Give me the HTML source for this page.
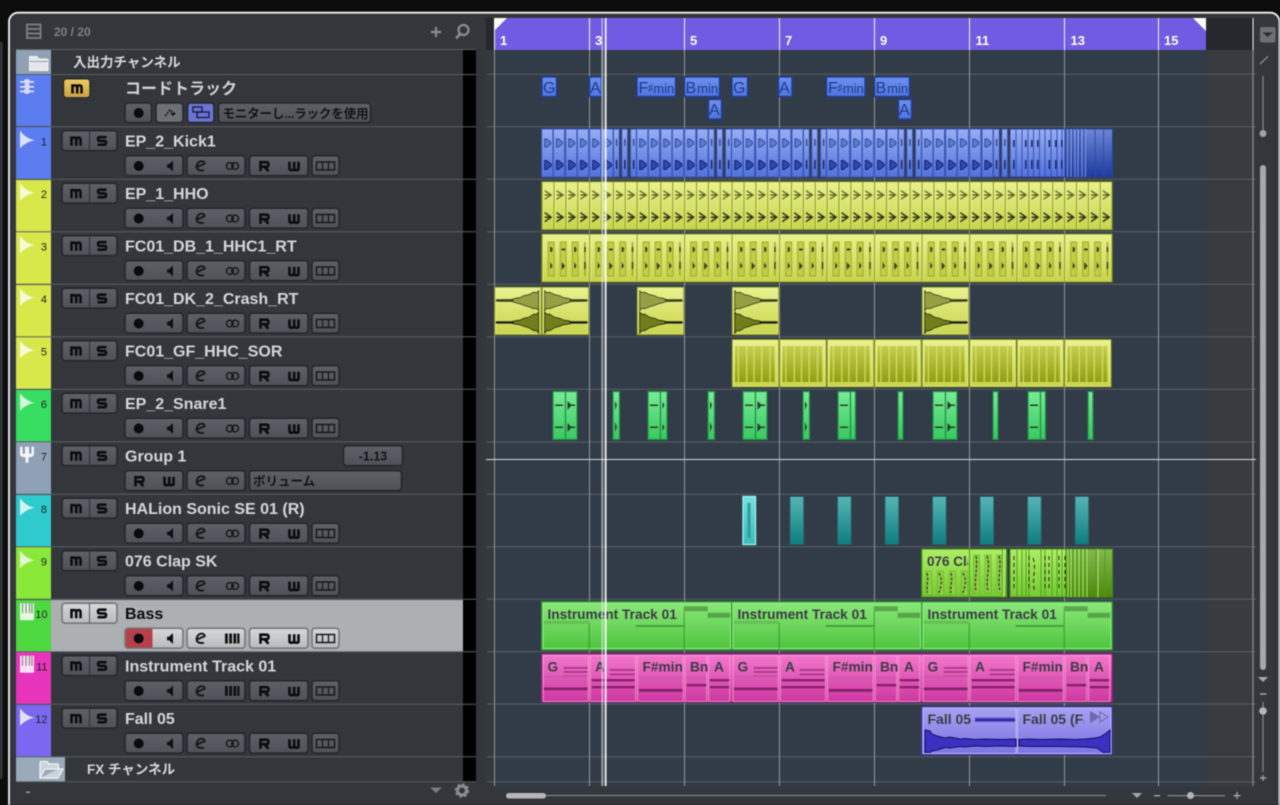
<!DOCTYPE html>
<html><head><meta charset="utf-8"><title>Tracks</title>
<style>
html,body{margin:0;padding:0;background:#0c0c0c;overflow:hidden}
svg{display:block;filter:blur(.4px)}
text{font-family:"Liberation Sans","Noto Sans CJK JP",sans-serif}
.n{font-size:16px;font-weight:700;fill:#d4d6d9}
.num{font-size:11px;fill:#20242a;text-anchor:end}
.b{fill:url(#bg);stroke:#24262a;stroke-width:1.6}
.l{fill:url(#bl);stroke:#73767a;stroke-width:1.6}
.i{fill:none;stroke:#0b0c0e;stroke-width:2.6}
.rl{font-size:13px;font-weight:700;fill:#fff}
.ct{font-size:16px;fill:#1f3b85}
.cm{font-size:13px;fill:#1f3b85}
.cl{font-size:13.7px;font-weight:700;fill:#3b3b45}
.sp{stroke:#5a5e63;stroke-width:1}
.gl{stroke:#92979d;stroke-width:1}
</style></head><body>
<svg width="1280" height="805" viewBox="0 0 1280 805" xmlns="http://www.w3.org/2000/svg">
<defs>
<linearGradient id="bg" x1="0" y1="0" x2="0" y2="1"><stop offset="0" stop-color="#5d6167"/><stop offset="1" stop-color="#4e5258"/></linearGradient>
<linearGradient id="bl" x1="0" y1="0" x2="0" y2="1"><stop offset="0" stop-color="#d6d8da"/><stop offset="1" stop-color="#b8babd"/></linearGradient>
<linearGradient id="gb" x1="0" y1="0" x2="0" y2="1"><stop offset="0" stop-color="#98aef5"/><stop offset="1" stop-color="#5272dc"/></linearGradient>
<linearGradient id="gb2" x1="0" y1="0" x2="0" y2="1"><stop offset="0" stop-color="#6d86d4"/><stop offset="1" stop-color="#1c3a9e"/></linearGradient>
<linearGradient id="gy" x1="0" y1="0" x2="0" y2="1"><stop offset="0" stop-color="#e9f28e"/><stop offset="1" stop-color="#c8d44e"/></linearGradient>
<linearGradient id="gyd" x1="0" y1="0" x2="0" y2="1"><stop offset="0" stop-color="#c6ce52"/><stop offset="1" stop-color="#929f12"/></linearGradient>
<linearGradient id="gg" x1="0" y1="0" x2="0" y2="1"><stop offset="0" stop-color="#78eb95"/><stop offset="1" stop-color="#38c860"/></linearGradient>
<linearGradient id="gt" x1="0" y1="0" x2="0" y2="1"><stop offset="0" stop-color="#57b4b4"/><stop offset="1" stop-color="#0d7e80"/></linearGradient>
<linearGradient id="gt2" x1="0" y1="0" x2="0" y2="1"><stop offset="0" stop-color="#78dede"/><stop offset="1" stop-color="#3cbaba"/></linearGradient>
<linearGradient id="gc" x1="0" y1="0" x2="0" y2="1"><stop offset="0" stop-color="#aeee66"/><stop offset="1" stop-color="#74ca32"/></linearGradient>
<linearGradient id="gc2" x1="0" y1="0" x2="0" y2="1"><stop offset="0" stop-color="#86b850"/><stop offset="1" stop-color="#4c8a0c"/></linearGradient>
<linearGradient id="gn" x1="0" y1="0" x2="0" y2="1"><stop offset="0" stop-color="#8ce87a"/><stop offset="1" stop-color="#4ec43e"/></linearGradient>
<linearGradient id="gp" x1="0" y1="0" x2="0" y2="1"><stop offset="0" stop-color="#f478cc"/><stop offset="1" stop-color="#cc38a0"/></linearGradient>
<linearGradient id="gv" x1="0" y1="0" x2="0" y2="1"><stop offset="0" stop-color="#a8a2f2"/><stop offset="1" stop-color="#7a72e2"/></linearGradient>
<linearGradient id="gc0" x1="0" y1="0" x2="0" y2="1"><stop offset="0" stop-color="#6f90ee"/><stop offset="1" stop-color="#4f74e2"/></linearGradient>
<linearGradient id="gm" x1="0" y1="0" x2="0" y2="1"><stop offset="0" stop-color="#efcb62"/><stop offset="1" stop-color="#c9a23e"/></linearGradient>

<g id="M"><path class="i" d="M-4.500 5V-3H-2.500Q0 -3.500 .2 -1V5M.2 -1Q.2 -3.500 3 -3Q4.500 -3 4.500 -1V5"/></g>
<g id="S"><path class="i" d="M4.500 -3.500H-2.500Q-4 -3.500 -4 -1.700T-2.500 .2H2.500Q4 .2 4 2.100T2.500 4H-4.500"/></g>
<g id="R"><path class="i" d="M-3.500 5.500V-3.500H2.500Q4.500 -3.500 4.500 -1.200T2.500 1H-3.500M.5 1L4.500 5.500"/></g>
<g id="W"><path class="i" d="M-4.500 -4V3Q-4.500 4.500 -2.500 4.500T.2 3V-4M.2 3Q.2 4.500 2.500 4.500T4.500 3V-4"/></g>
<g id="rec"><circle r="5" fill="#0b0b0d"/></g>
<g id="spk"><path d="M-3 -1.800H-1L3 -5.500V5.500L-1 1.800H-3Z" fill="#0e0f11"/></g>
<g id="e"><path d="M-4.500 1.500L4.200 -2.400C4 -5.500 -1 -6 -3.200 -2C-5.200 2 -3 5.500 3.500 4.300" fill="none" stroke="#17181b" stroke-width="2"/></g>
<g id="lk"><circle cx="-2.600" r="3.400" fill="none" stroke="#17181b" stroke-width="1.500"/><circle cx="2.600" r="3.400" fill="none" stroke="#17181b" stroke-width="1.500"/></g>
<g id="pn"><path d="M-7 -5H-4.200V5H-7ZM-2.800 -5H0V5H-2.800ZM1.400 -5H4.200V5H1.400ZM5.200 -5H7.500V5H5.200Z" fill="#111"/></g>
<g id="mt"><rect x="-9" y="-4" width="18" height="8" fill="none" stroke="#17181b" stroke-width="1.500"/><path d="M-3 -4V4M3 -4V4" stroke="#17181b" stroke-width="1.300"/></g>

<g id="ms"><rect class="b" x="62" y="4" width="55" height="20" rx="3"/><path d="M89.500 4V24" stroke="#2b2d31"/><use href="#M" x="76" y="14"/><use href="#S" x="102" y="14"/></g>
<g id="c1"><rect class="b" x="125" y="29" width="58" height="20" rx="3"/><use href="#rec" x="138.700" y="39.300"/><use href="#spk" x="170" y="39.300"/></g>
<g id="c2"><rect class="b" x="187" y="29" width="58" height="20" rx="3"/><use href="#e" x="200.500" y="39.300"/><use href="#lk" x="232.500" y="39.300"/></g>
<g id="c2p"><rect class="b" x="187" y="29" width="58" height="20" rx="3"/><use href="#e" x="200.500" y="39.300"/><use href="#pn" x="232" y="39.300"/></g>
<g id="c3"><rect class="b" x="249.500" y="29" width="58.500" height="20" rx="3"/><use href="#R" x="264" y="39"/><use href="#W" x="294" y="39"/></g>
<g id="c4"><rect class="b" x="312" y="29" width="27" height="20" rx="3"/><use href="#mt" x="325.500" y="39.300"/></g>
<g id="ctl"><use href="#ms"/><use href="#c1"/><use href="#c2"/><use href="#c3"/><use href="#c4"/></g>
<g id="ctlp"><use href="#ms"/><use href="#c1"/><use href="#c2p"/><use href="#c3"/><use href="#c4"/></g>
<path id="pl" d="M20 4L20 21.500C23 18.500 28 14.500 35 13.500C28 12.500 23 8 20 4Z" fill="#fff" fill-opacity=".78"/>
<g id="kb"><rect x="20" y="4" width="14" height="17" fill="#fff" fill-opacity=".85"/><path d="M22.500 4V14M26 4V14M29.500 4V14M32 4V14" stroke="#000" stroke-opacity=".4" stroke-width="1.300"/></g>

<g id="hit"><path d="M1.500 -4H3.500L7.500 -1V1L3.500 4H1.500Z" fill="#5c7ad8" stroke="#3a4a90" stroke-width="1"/></g>
<g id="hit2"><path d="M1.500 -4.500H3.500L8 -1V1L3.500 4.500H1.500Z" fill="#2c48b4" stroke="#182464" stroke-width="1"/></g>
<g id="ks"><rect x="0" y="0" width="11.200" height="48" fill="url(#gb)" stroke="#3a58b8"/><use href="#hit" x="1.500" y="14"/><use href="#hit2" x="1.500" y="36"/></g>
<g id="kt"><rect x="0" y="0" width="6" height="48" fill="url(#gb)" stroke="#2f4aa0"/><rect x="2.500" y="10" width="1.500" height="7" fill="#3a4a90"/><rect x="2.500" y="31" width="1.500" height="9" fill="#182464"/></g>
<g id="kp"><use href="#ks"/><use href="#ks" x="11.700"/><use href="#ks" x="24"/><use href="#ks" x="35.700"/><use href="#ks" x="48"/><use href="#ks" x="60.300"/><use href="#kt" x="71.700"/><use href="#kt" x="80"/><use href="#kt" x="88.700"/></g>

<pattern id="p2" patternUnits="userSpaceOnUse" x="541.67" y="181.7" width="11.875" height="48">
<rect x="0" width="1" height="48" fill="#8a9922"/><rect x="1" width="1" height="48" fill="#f2f8a6" opacity=".5"/>
<path d="M3 9L9.500 13.300L3 17.500M3 13.300H9" fill="none" stroke="#5c6128" stroke-width="1.300"/>
<path d="M3 31L9.500 35.500L3 40M3 35.500H9" fill="none" stroke="#2f3218" stroke-width="1.400"/>
</pattern>
<pattern id="p3" patternUnits="userSpaceOnUse" x="541.67" y="234" width="47.5" height="48">
<rect x="0" width="1" height="48" fill="#8e9d22"/><rect x="1" width="1" height="48" fill="#f2f8a6" opacity=".6"/>
<g fill="#c2ce48" stroke="#9aa828" stroke-width=".9"><rect x="6.500" y="8" width="6" height="34"/><rect x="18.500" y="8" width="6" height="34"/><rect x="30.500" y="8" width="6" height="34"/></g>
<rect x="42.500" y="8" width="1.500" height="34" fill="#9aa828"/>
<g fill="#3c401e"><path d="M8.500 13H10L11 15.500L10 18H8.500Z"/><path d="M20 14.500H23.500V16.500H20Z"/><path d="M32.500 13H34L35 15.500L34 18H32.500Z"/><rect x="42.500" y="13" width="1.600" height="5"/><path d="M8.500 28L11 32L8.500 35Z"/><path d="M20 28L23.500 32L20 36Z"/><path d="M32.500 28L35 32L32.500 35Z"/><rect x="42.500" y="28" width="1.600" height="7"/></g>
</pattern>

<g id="wv">
<path d="M3 4L5 6L8 5.500L13 8L18 9L22 11L26 11.500L30 12.800L45 13V14.500L30 14.800L26 16L22 17L18 18.500L13 20L8 22L5 21.500L3 24Z" fill="#969f44" stroke="#3a3d1e" stroke-width=".8"/>
<path d="M3 25.300L5 27.500L8 27.500L13 30.600L18 31.500L22 33.500L26 34L30 35L45 35V36.500L30 36.500L26 37.500L22 38L18 39.500L13 41L8 44L5 44L3 46.600Z" fill="#717e1c" stroke="#26280f" stroke-width=".8"/>
<rect x="28" y="13" width="18" height="1.400" fill="#3a3c22"/><rect x="28" y="35" width="18" height="1.500" fill="#1c1d0e"/>
</g>
<g id="cy"><rect x=".5" y=".5" width="46.500" height="47.500" fill="url(#gy)" stroke="#7f8c1c"/><rect x="1.500" y="1.500" width="44.500" height="45.500" fill="none" stroke="#f0f7a0" stroke-opacity=".5"/></g>
<g id="c5"><use href="#cy"/><rect x="3.300" y="7" width="39.700" height="36" fill="url(#gyd)"/><path d="M6.700 7V43M15 7V43M22.300 7V43M30 7V43M38.300 7V43" stroke="#e0e672" stroke-width="1.300" opacity=".8"/></g>

<g id="notesB">
<rect x="2" y="19" width="45" height="3" fill="#3d8c32" opacity=".3"/>
<rect x="94" y="23.500" width="48" height="1.400" fill="#2e7a28" opacity=".8"/>
<rect x="142" y="4.500" width="24" height="5" fill="#3d8032" opacity=".6"/>
<rect x="166" y="11" width="22.500" height="5" fill="#3d8032" opacity=".6"/>
<path d="M47.500 21V47M142.500 10V47" stroke="#2f8a2c" stroke-width="1" opacity=".8"/>
</g>
<g id="notesP">
<g fill="#a83888"><rect x="22" y="13" width="24" height="1.800"/><rect x="22" y="17" width="24" height="1.800"/><rect x="22" y="21.500" width="24" height="1.800"/><rect x="68" y="15" width="25" height="1.800"/><rect x="68" y="19.500" width="25" height="1.800"/></g>
<g fill="#c75aa8"><rect x="2" y="22" width="45" height="1.500"/><rect x="97" y="22.800" width="44" height="2"/><rect x="145" y="22.800" width="20" height="2"/></g>
<g fill="#87206e"><rect x="2" y="33.500" width="44" height="2.800"/><rect x="50" y="25" width="43" height="2.400"/><rect x="50" y="32" width="43" height="2.400"/><rect x="97" y="35" width="44" height="2.800"/><rect x="145" y="30" width="20" height="2.400"/><rect x="168" y="25" width="20" height="2.400"/><rect x="168" y="32" width="20" height="2.400"/></g>
<g fill="none" stroke="#f9a8de" stroke-opacity=".7"><rect x="1.500" y="1.500" width="45" height="46"/><rect x="48.500" y="1.500" width="45.500" height="46"/><rect x="96" y="1.500" width="45.500" height="46"/><rect x="143.500" y="1.500" width="21.500" height="46"/><rect x="167" y="1.500" width="21" height="46"/></g>
</g>
<clipPath id="cc1"><rect x="924" y="550" width="44" height="20"/></clipPath>
<clipPath id="cf1"><rect x="1020" y="708" width="64" height="22"/></clipPath>
</defs>

<!-- window -->
<rect width="1280" height="805" fill="#0c0c0c"/>
<rect x="0" y="42" width="2.500" height="737" fill="#36393e"/>
<rect x="9" y="12.700" width="1270.500" height="800" rx="9" fill="#33373c" stroke="#f2f2f2" stroke-width="1.800"/>

<!-- header -->
<g fill="none" stroke="#777b80" stroke-width="2"><rect x="27" y="24.500" width="13.500" height="13.500"/><path d="M27 29H40.500M27 33.500H40.500"/></g>
<text x="54" y="36" font-size="12" font-weight="700" fill="#7e8288">20 / 20</text>
<path d="M436 27V37M431 32H441" stroke="#8a8e93" stroke-width="2.200"/>
<circle cx="463.500" cy="30" r="5" fill="none" stroke="#8a8e93" stroke-width="2.200"/><path d="M460 34L456 38.500" stroke="#8a8e93" stroke-width="2.600"/>

<!-- track list background -->
<rect x="463" y="50" width="13" height="732" fill="#000"/>
<rect x="16" y="50" width="35" height="24" fill="#8fa1b4"/>
<rect x="16" y="75" width="35" height="51" fill="#5b7df0"/>
<rect x="16" y="127" width="35" height="52" fill="#5b7df0"/>
<rect x="16" y="180" width="35" height="52" fill="#d8e84b"/>
<rect x="16" y="232" width="35" height="52" fill="#d8e84b"/>
<rect x="16" y="285" width="35" height="52" fill="#d8e84b"/>
<rect x="16" y="337" width="35" height="52" fill="#d8e84b"/>
<rect x="16" y="390" width="35" height="52" fill="#37de5f"/>
<rect x="16" y="442" width="35" height="52" fill="#8fa1b4"/>
<rect x="16" y="495" width="35" height="52" fill="#2fcacd"/>
<rect x="16" y="547" width="35" height="52" fill="#8ae838"/>
<rect x="16" y="600" width="35" height="52" fill="#4ed940"/>
<rect x="16" y="652" width="35" height="52" fill="#e834ba"/>
<rect x="16" y="705" width="35" height="52" fill="#7a68f0"/>
<rect x="16" y="757" width="49" height="25" fill="#9aaabb"/>
<rect x="51" y="600" width="412" height="52" fill="#adb0b3"/>
<path class="sp" d="M16 49.500H476M16 74.500H476M16 126.700H476M16 179.200H476M16 231.700H476M16 284.200H476M16 336.700H476M16 389.200H476M16 441.700H476M16 494.200H476M16 546.700H476M16 599.200H476M16 651.700H476M16 704.200H476M16 756.700H476M16 781.700H476"/>

<!-- folder row -->
<path d="M29.500 56.500H37L39 59H46.500C47.500 59 48 59.500 48 60V70.500H29.500Z" fill="#e4e8ec" stroke="#f4f4f4"/><path d="M29.500 61.500H48" stroke="#8fa1b4"/>
<text x="73" y="67" font-size="13.500" font-weight="700" fill="#d6d8da">入出力チャンネル</text>

<!-- chord track -->
<g fill="#d5dbf8"><rect x="20" y="81" width="14" height="1.800"/><rect x="20" y="86" width="14" height="1.800"/><rect x="20" y="90.500" width="14" height="1.800"/><rect x="24" y="79" width="6" height="5.500" rx="2.500"/><rect x="24" y="84" width="6" height="5" rx="2.500"/><rect x="24" y="88.500" width="6" height="5.500" rx="2.500"/></g>
<rect x="63.500" y="78.800" width="26.500" height="19" rx="3" fill="url(#gm)" stroke="#25272b" stroke-width="1.400"/><use href="#M" x="77" y="88.500"/>
<text x="125" y="94" font-size="16" font-weight="700" fill="#d0d2d5">コードトラック</text>
<rect class="b" x="125" y="103" width="26.500" height="19.500" rx="3"/><use href="#rec" x="138.700" y="113"/>
<rect x="156" y="103" width="27" height="19.500" rx="3" fill="#6d7176" stroke="#25272b" stroke-width="1.600"/>
<path d="M165 116L170 110L175 114" fill="none" stroke="#111" stroke-width="1.400" stroke-dasharray="2 1"/><path d="M170 113L176 113L173 116Z" fill="#111"/>
<rect x="187.500" y="103" width="26.500" height="19.500" rx="3" fill="#6a74d6" stroke="#25272b" stroke-width="1.600"/>
<g fill="none" stroke="#1b1e3c" stroke-width="1.400"><rect x="193" y="107" width="9" height="5"/><rect x="197" y="112" width="12" height="5.500"/></g>
<rect class="b" x="218.500" y="103" width="152" height="19.500" rx="3"/>
<text x="222.500" y="118" font-size="12.500" font-weight="700" fill="#121316" textLength="146">モニターし...ラックを使用</text>

<!-- track 1-12 -->
<g transform="translate(0,126.700)"><use href="#pl"/><text class="num" x="47" y="19">1</text><use href="#ctl"/><text class="n" x="125" y="20">EP_2_Kick1</text></g>
<g transform="translate(0,179.200)"><use href="#pl"/><text class="num" x="47" y="19">2</text><use href="#ctl"/><text class="n" x="125" y="20">EP_1_HHO</text></g>
<g transform="translate(0,231.700)"><use href="#pl"/><text class="num" x="47" y="19">3</text><use href="#ctl"/><text class="n" x="125" y="20">FC01_DB_1_HHC1_RT</text></g>
<g transform="translate(0,284.200)"><use href="#pl"/><text class="num" x="47" y="19">4</text><use href="#ctl"/><text class="n" x="125" y="20">FC01_DK_2_Crash_RT</text></g>
<g transform="translate(0,336.700)"><use href="#pl"/><text class="num" x="47" y="19">5</text><use href="#ctl"/><text class="n" x="125" y="20">FC01_GF_HHC_SOR</text></g>
<g transform="translate(0,389.200)"><use href="#pl"/><text class="num" x="47" y="19">6</text><use href="#ctl"/><text class="n" x="125" y="20">EP_2_Snare1</text></g>
<g transform="translate(0,441.700)">
<path d="M20 5V12C20 14.500 22 15.500 25.500 15.500V21H28.500V15.500C32 15.500 34 14.500 34 12V5H31.500V12H29V5H25V12H22.500V5Z" fill="#fff" fill-opacity=".9"/>
<text class="num" x="47" y="19">7</text><use href="#ms"/>
<text class="n" x="125" y="20">Group 1</text>
<rect class="b" x="343.500" y="4" width="59" height="20" rx="3"/><text x="373" y="19" font-size="12.500" font-weight="700" fill="#121316" text-anchor="middle">-1.13</text>
<rect class="b" x="125" y="29" width="58" height="20" rx="3"/><use href="#R" x="139" y="39"/><use href="#W" x="169" y="39"/>
<use href="#c2"/>
<rect class="b" x="249.500" y="29" width="152" height="20" rx="3"/><text x="253" y="44" font-size="12.500" font-weight="700" fill="#121316">ボリューム</text>
</g>
<g transform="translate(0,494.200)"><use href="#pl"/><text class="num" x="47" y="19">8</text><use href="#ctl"/><text class="n" x="125" y="20">HALion Sonic SE 01 (R)</text></g>
<g transform="translate(0,546.700)"><use href="#pl"/><text class="num" x="47" y="19">9</text><use href="#ctl"/><text class="n" x="125" y="20">076 Clap SK</text></g>
<g transform="translate(0,599.200)"><use href="#kb"/><text class="num" x="47.500" y="19">10</text>
<rect class="l" x="62" y="4" width="55" height="20" rx="3"/><path d="M89.500 4V24" stroke="#55585c"/><use href="#M" x="76" y="14"/><use href="#S" x="102" y="14"/>
<text class="n" x="125" y="20" style="fill:#0b0b0c">Bass</text>
<rect class="l" x="125" y="29" width="58" height="20" rx="3"/><path d="M125.700 32a3 3 0 0 1 3-2.300H152.500V48.300H128.700a3 3 0 0 1-3-2.300Z" fill="#b5404b"/><use href="#rec" x="138.700" y="39.300"/><use href="#spk" x="170" y="39.300"/>
<rect class="l" x="187" y="29" width="58" height="20" rx="3"/><use href="#e" x="200.500" y="39.300"/><use href="#pn" x="232" y="39.300"/>
<rect class="l" x="249.500" y="29" width="58.500" height="20" rx="3"/><use href="#R" x="264" y="39"/><use href="#W" x="294" y="39"/>
<rect class="l" x="312" y="29" width="27" height="20" rx="3"/><use href="#mt" x="325.500" y="39.300"/></g>
<g transform="translate(0,651.700)"><use href="#kb"/><text class="num" x="47.500" y="19">11</text><use href="#ctlp"/><text class="n" x="125" y="20">Instrument Track 01</text></g>
<g transform="translate(0,704.200)"><use href="#pl"/><text class="num" x="47.500" y="19">12</text><use href="#ctl"/><text class="n" x="125" y="20">Fall 05</text></g>

<!-- FX folder -->
<path d="M40 778V763C40 762 40.500 761.500 41.500 761.500H47L49 764H57C58 764 58.500 764.500 58.500 765.500V769H45L40 778H58L63 769H58.500" fill="#dfe4e9" fill-opacity=".7" stroke="#f2f4f6" stroke-width="1.200"/>
<text x="87" y="774" font-size="13.500" font-weight="700" fill="#d6d8da">FX チャンネル</text>

<!-- bottom-left -->
<rect x="26" y="791.500" width="4" height="1.500" fill="#9a9ea3"/>
<path d="M430 787.500H442L436 793Z" fill="#777b80"/>
<circle cx="462" cy="790.500" r="4.500" fill="none" stroke="#8a8e93" stroke-width="3"/><circle cx="462" cy="790.500" r="6.300" fill="none" stroke="#8a8e93" stroke-width="2" stroke-dasharray="2.400 2.550"/>

<!-- arrange bg -->
<rect x="486" y="50" width="8" height="736" fill="#35393e"/>
<rect x="494" y="50" width="712" height="736" fill="#323c48"/>
<rect x="1206" y="50" width="47" height="736" fill="#383b40"/>
<!-- ruler -->
<rect x="486" y="18" width="8" height="32" fill="#25282c"/>
<rect x="494" y="18" width="712" height="32" fill="#705be2"/>
<rect x="1206" y="18" width="47" height="32" fill="#25282c"/>
<path d="M494 18H507L494 31Z" fill="#fff"/><path d="M1193 18H1206V31Z" fill="#fff"/>
<path d="M494.500 18V50M589.500 18V50M684.500 18V50M779.500 18V50M874.500 18V50M969.500 18V50M1064.500 18V50M1158.500 18V50M1253 18V50" stroke="#f4f4fa" stroke-width="1"/>
<text class="rl" x="500" y="45">1</text><text class="rl" x="595" y="45">3</text><text class="rl" x="690" y="45">5</text><text class="rl" x="785" y="45">7</text><text class="rl" x="880" y="45">9</text><text class="rl" x="975.500" y="45">11</text><text class="rl" x="1070.500" y="45">13</text><text class="rl" x="1164" y="45">15</text>

<!-- grid -->
<path class="sp" d="M487 74.300H1256M487 126.700H1256M487 179.300H1256M487 231.700H1256M487 284.200H1256M487 336.700H1256M487 389.300H1256M487 442H1256M487 494.300H1256M487 546.700H1256M487 599.300H1256M487 651.700H1256M487 704H1256M487 756.700H1256M487 781.700H1256"/>
<path class="gl" d="M494.500 50V786M589.500 50V786M684.500 50V786M779.500 50V786M874.500 50V786M969.500 50V786M1064.500 50V786M1158.500 50V786"/>
<path d="M1253 50V786" stroke="#8c9096" stroke-width="1.200"/>
<path d="M486 459.500H1256" stroke="#d8dbde" stroke-width="1"/>

<!-- chord events -->
<g fill="url(#gc0)" stroke="#1d3d9e" stroke-width="1.400">
<rect x="542" y="77" width="14.500" height="19.500"/><rect x="589.500" y="77" width="12" height="19.500"/><rect x="637" y="77" width="38.500" height="19.500"/><rect x="684.500" y="77" width="35" height="19.500"/><rect x="708.500" y="99.500" width="13" height="19.500"/><rect x="732" y="77" width="15.500" height="19.500"/><rect x="778.500" y="77" width="13.500" height="19.500"/><rect x="826.500" y="77" width="38.500" height="19.500"/><rect x="874.500" y="77" width="35" height="19.500"/><rect x="898.500" y="99.500" width="13" height="19.500"/></g>
<text class="ct" x="543" y="93">G</text><text class="ct" x="590" y="93">A</text>
<text class="ct" x="638.500" y="93">F<tspan font-size="10" dy="-2">♯</tspan><tspan class="cm" dy="2" font-size="13">min</tspan></text>
<text class="ct" x="685.500" y="93">B<tspan font-size="13" dx="1">min</tspan></text>
<text class="ct" x="709" y="115">A</text><text class="ct" x="733" y="93">G</text><text class="ct" x="779" y="93">A</text>
<text class="ct" x="828" y="93">F<tspan font-size="10" dy="-2">♯</tspan><tspan class="cm" dy="2" font-size="13">min</tspan></text>
<text class="ct" x="875.500" y="93">B<tspan font-size="13" dx="1">min</tspan></text>
<text class="ct" x="899" y="115">A</text>

<!-- row 1 kick -->
<g transform="translate(541.670,129)"><use href="#kp"/><use href="#kp" x="95"/><use href="#kp" x="190"/><use href="#kp" x="285"/><use href="#kp" x="380"/></g>
<g transform="translate(1010,129)">
<rect x="0" y="0" width="55" height="48" fill="url(#gb)" stroke="#2a4296"/>
<rect x="55" y="0" width="47.500" height="48" fill="url(#gb2)" stroke="#2a4296"/>
<path d="M6 0V48M12 0V48M18 0V48M23.500 0V48M29.500 0V48M35 0V48M41 0V48M47 0V48M52 0V48M56.500 0V48M59.500 0V48M63 0V48M66.500 0V48M70 0V48M74 0V48M85 0V48M93.500 0V48" stroke="#2f4cac" stroke-width=".9"/>
<path d="M57.500 0V48M61 0V48M65 0V48M68 0V48M72 0V48M75.500 0V48" stroke="#90a8ee" stroke-width="1" opacity=".8"/>
<g fill="#1a2a70"><rect x="3" y="11" width="1.600" height="7"/><rect x="15" y="11" width="1.600" height="7"/><rect x="21" y="11" width="1.600" height="7"/><rect x="27" y="11" width="1.600" height="7"/><rect x="38.500" y="11" width="1.600" height="7"/><rect x="45" y="11" width="1.600" height="7"/><rect x="51" y="11" width="1.600" height="7"/><rect x="3" y="31" width="1.600" height="9"/><rect x="15" y="31" width="1.600" height="9"/><rect x="21" y="31" width="1.600" height="9"/><rect x="27" y="31" width="1.600" height="9"/><rect x="38.500" y="31" width="1.600" height="9"/><rect x="45" y="31" width="1.600" height="9"/><rect x="51" y="31" width="1.600" height="9"/></g>
</g>

<!-- row 2 -->
<rect x="541.670" y="181.700" width="570.500" height="48" fill="url(#gy)"/><rect x="541.670" y="181.700" width="570.500" height="48" fill="url(#p2)" stroke="#808e1c"/>
<!-- row 3 -->
<rect x="541.670" y="234" width="570.500" height="48" fill="url(#gy)"/><rect x="541.670" y="234" width="570.500" height="48" fill="url(#p3)" stroke="#808e1c"/>

<!-- row 4 -->
<g transform="translate(494.200,286.700)"><use href="#cy"/><g transform="matrix(-1 0 0 1 47.500 0)"><use href="#wv"/></g></g>
<g transform="translate(541.670,286.700)"><use href="#cy"/><use href="#wv"/></g>
<g transform="translate(636.700,286.700)"><use href="#cy"/><use href="#wv"/></g>
<g transform="translate(731.700,286.700)"><use href="#cy"/><use href="#wv"/></g>
<g transform="translate(921.700,286.700)"><use href="#cy"/><use href="#wv"/></g>

<!-- row 5 -->
<g transform="translate(731.700,339)"><use href="#c5"/></g><g transform="translate(779.200,339)"><use href="#c5"/></g><g transform="translate(826.700,339)"><use href="#c5"/></g><g transform="translate(874.200,339)"><use href="#c5"/></g><g transform="translate(921.700,339)"><use href="#c5"/></g><g transform="translate(969.200,339)"><use href="#c5"/></g><g transform="translate(1016.700,339)"><use href="#c5"/></g><g transform="translate(1064.200,339)"><use href="#c5"/></g>

<!-- row 6 -->
<g fill="url(#gg)" stroke="#1f8c46" stroke-width="1.200">
<rect x="553" y="391.500" width="12.500" height="48"/><rect x="565.500" y="391.500" width="11.500" height="48"/><rect x="613" y="391.500" width="6.500" height="48"/><rect x="648" y="391.500" width="12.500" height="48"/><rect x="660.500" y="391.500" width="6.500" height="48"/><rect x="708" y="391.500" width="6.500" height="48"/><rect x="743" y="391.500" width="12.500" height="48"/><rect x="755.500" y="391.500" width="11.500" height="48"/><rect x="803" y="391.500" width="6.500" height="48"/><rect x="838" y="391.500" width="12.500" height="48"/><rect x="850.500" y="391.500" width="5" height="48"/><rect x="898" y="391.500" width="5" height="48"/><rect x="933" y="391.500" width="12.500" height="48"/><rect x="945.500" y="391.500" width="11.500" height="48"/><rect x="993" y="391.500" width="5" height="48"/><rect x="1028" y="391.500" width="12.500" height="48"/><rect x="1040.500" y="391.500" width="5" height="48"/><rect x="1088" y="391.500" width="5" height="48"/></g>
<g fill="#2e3a30">
<path d="M555 404.500H563V406H555ZM567.500 401L571 404.500H575V406H571L567.500 410ZM555 426.500H563V428H555ZM567.500 423L571 426.500H575V428H571L567.500 432Z"/>
<path d="M615 401L617 405L615 410ZM615 422L617 427L615 432Z"/>
<path d="M650 404.500H658V406H650ZM662.500 402L664.500 405L662.500 409ZM650 426.500H658V428H650ZM662.500 424L664.500 427L662.500 431Z"/>
<path d="M710 401L712 405L710 410ZM710 422L712 427L710 432Z"/>
<path d="M745 404.500H753V406H745ZM757.500 401L761 404.500H765V406H761L757.500 410ZM745 426.500H753V428H745ZM757.500 423L761 426.500H765V428H761L757.500 432Z"/>
<path d="M805 401L807 405L805 410ZM805 422L807 427L805 432Z"/>
<path d="M840 404.500H848V406H840ZM840 426.500H848V428H840Z"/>
<path d="M935 404.500H943V406H935ZM947.500 401L951 404.500H955V406H951L947.500 410ZM935 426.500H943V428H935ZM947.500 423L951 426.500H955V428H951L947.500 432Z"/>
<path d="M1030 404.500H1038V406H1030ZM1030 426.500H1038V428H1030Z"/>
</g>

<!-- row 8 -->
<rect x="743" y="496.500" width="12.500" height="48" fill="url(#gt2)" stroke="#8ff2f2" stroke-width="1.400"/><rect x="747.500" y="503" width="3" height="35" fill="#2f9c9e"/>
<g fill="url(#gt)" stroke="#2a5d66" stroke-width=".8"><rect x="790" y="496.500" width="13.700" height="48"/><rect x="837.500" y="496.500" width="13.700" height="48"/><rect x="885" y="496.500" width="13.700" height="48"/><rect x="932.500" y="496.500" width="13.700" height="48"/><rect x="980" y="496.500" width="13.700" height="48"/><rect x="1027.500" y="496.500" width="13.700" height="48"/><rect x="1075" y="496.500" width="13.700" height="48"/></g>

<!-- row 9 -->
<rect x="921.700" y="549" width="85" height="48" fill="url(#gc)" stroke="#3f8c10" stroke-width="1.200"/>
<path d="M969.500 549V597M1002.500 549V597" stroke="#4e9c1c"/><path d="M1003.500 549V597" stroke="#c8f58e"/>
<g fill="#8fd049" stroke="#6db02c" stroke-width=".7"><rect x="925.500" y="571" width="6" height="24"/><rect x="937.500" y="571" width="6" height="24"/><rect x="949.500" y="571" width="6" height="24"/><rect x="961.500" y="571" width="6" height="24"/><rect x="973.500" y="555" width="6" height="38"/><rect x="985" y="555" width="6" height="38"/><rect x="997" y="555" width="5" height="38"/></g>
<path d="M927 573C929 580 926 586 927.500 593M939 573C943 580 941 586 939 593M951 573C953 580 950 586 951 593M963 573C967 580 965 586 963 593M976 556C978 565 974 580 976 591M987 556C991 565 985 580 988 591M999 556C1002 565 997 580 1000 591" fill="none" stroke="#1e2a10" stroke-width="1.100" stroke-dasharray="3 1.500"/>
<text x="927" y="566" font-size="13.500" font-weight="700" fill="#3b3b45" clip-path="url(#cc1)">076 Clap</text>
<rect x="1010" y="549" width="56" height="48" fill="url(#gc)" stroke="#3f8c10"/><rect x="1066" y="549" width="46.500" height="48" fill="url(#gc2)" stroke="#3f8c10"/>
<path d="M1017 549V597M1022 549V597M1026 549V597M1029 549V597M1041 549V597M1045 549V597M1052 549V597M1057 549V597M1062 549V597M1069 549V597M1073 549V597M1077 549V597M1081 549V597M1085 549V597M1096 549V597M1105 549V597" stroke="#4e9c1c" stroke-width=".9"/>
<path d="M1068 549V597M1071 549V597M1075 549V597M1079 549V597M1083 549V597M1087 549V597M1098 549V597" stroke="#b4ec72" stroke-width=".9"/>
<path d="M1014 556V590M1029 556V590M1033 558C1037 568 1031 580 1035 592M1045 556V590M1049 556V590M1059 556V590M1065 556V590" fill="none" stroke="#1e2a10" stroke-width="1" stroke-dasharray="4 3"/>

<!-- row 10 -->
<g fill="url(#gn)" stroke="#2f9c30" stroke-width="1.400"><rect x="541.700" y="601.800" width="190" height="48"/><rect x="731.700" y="601.800" width="190" height="48"/><rect x="921.700" y="601.800" width="190.500" height="48"/></g>
<g fill="none" stroke="#96ec88" stroke-width="1"><rect x="543" y="603" width="187.500" height="45.500"/><rect x="733" y="603" width="187.500" height="45.500"/><rect x="923" y="603" width="188" height="45.500"/></g>
<g transform="translate(541.700,601.800)"><use href="#notesB"/></g><g transform="translate(731.700,601.800)"><use href="#notesB"/></g><g transform="translate(921.700,601.800)"><use href="#notesB"/></g>
<text class="cl" x="547.500" y="619">Instrument Track 01</text><text class="cl" x="737.500" y="619">Instrument Track 01</text><text class="cl" x="927.500" y="619">Instrument Track 01</text>

<!-- row 11 -->
<rect x="541.700" y="654" width="570.500" height="48" fill="url(#gp)" stroke="#9c1c80" stroke-width="1.200"/>
<g transform="translate(541.700,654)"><use href="#notesP"/></g><g transform="translate(731.700,654)"><use href="#notesP"/></g><g transform="translate(921.700,654)"><use href="#notesP"/></g>
<text class="cl" x="547.500" y="671.500">G</text><text class="cl" x="595" y="671.500">A</text><text class="cl" x="642.500" y="671.500">F#min</text><text class="cl" x="690" y="671.500">Bn</text><text class="cl" x="714" y="671.500">A</text>
<text class="cl" x="737.500" y="671.500">G</text><text class="cl" x="785" y="671.500">A</text><text class="cl" x="832.500" y="671.500">F#min</text><text class="cl" x="880" y="671.500">Bn</text><text class="cl" x="904" y="671.500">A</text>
<text class="cl" x="927.500" y="671.500">G</text><text class="cl" x="975" y="671.500">A</text><text class="cl" x="1022.500" y="671.500">F#min</text><text class="cl" x="1070" y="671.500">Bn</text><text class="cl" x="1094" y="671.500">A</text>

<!-- row 12 -->
<rect x="921.700" y="706.700" width="190.500" height="48" fill="url(#gv)" stroke="#3c30a8" stroke-width="1.200"/>
<g fill="none" stroke="#bdb8f6" stroke-width="1"><rect x="923" y="708" width="93" height="45.500"/><rect x="1017.500" y="708" width="93.500" height="45.500"/></g>
<path d="M925 730L930 731L932 734L937 736L945 738L950 737L960 739L965 738.500L975 739.500L985 739L1000 739.500L1016 739V746.500L1000 746L985 746.500L975 746L965 747L960 746.500L950 748L945 747.500L937 750L932 751L930 752.500H925Z" fill="#3a30c2" stroke="#15105c" stroke-width="1"/>
<path d="M1019 739.500L1030 739L1040 739.500L1060 739L1075 739.500L1085 739L1095 738L1100 737L1105 734L1110 730V752.500H1103L1100 750L1097 748L1085 747L1060 746.500L1040 746.500L1030 746.500L1019 746Z" fill="#3a30c2" stroke="#15105c" stroke-width="1"/>
<path d="M975 717.500H1015V722H975Z" fill="#4a40cc" opacity=".85"/><path d="M975 720H1015" stroke="#15105c" stroke-width="1"/>
<text class="cl" x="927.500" y="724" style="font-size:14px">Fall 05</text>
<text class="cl" x="1022.500" y="724" style="font-size:14px" clip-path="url(#cf1)">Fall 05 (Fall</text>
<path d="M1090 711L1100 717L1090 723Z" fill="#6e68a8"/><path d="M1100 712L1108 717L1100 722Z" fill="none" stroke="#6e68a8"/>

<!-- locators -->
<rect x="602" y="50" width="3" height="736" fill="#fff" opacity=".14"/>
<rect x="601.500" y="18" width="1.200" height="768" fill="#e6e8ea" opacity=".75"/>
<rect x="604.800" y="18" width="1.800" height="768" fill="#fff" opacity=".9"/>

<!-- right controls -->
<rect x="1260" y="27" width="15.500" height="15.500" rx="2" fill="#6c7076"/><path d="M1262.500 32.500H1273L1267.700 37Z" fill="#2b2d31"/>
<path d="M1260 64L1268 56.500" stroke="#85898e" stroke-width="1.500"/>
<path d="M1263 76V133" stroke="#84888d" stroke-width="1.200"/><circle cx="1263" cy="133.500" r="3.500" fill="#a0a3a6"/>
<rect x="1260" y="165" width="6" height="505" rx="3" fill="#a5a7aa"/>
<path d="M1258 677H1268L1263 682Z" fill="#a5a8ab"/>
<path d="M1260 694H1266.500" stroke="#a5a8ab" stroke-width="1.400"/>
<path d="M1263 702V772" stroke="#84888d" stroke-width="1.200"/><circle cx="1263" cy="711" r="3.800" fill="#b4b6b9"/>
<path d="M1263 775V781M1260 778H1266.500" stroke="#a5a8ab" stroke-width="1.300"/>

<!-- bottom scroll -->
<path d="M506 795.500H1106" stroke="#909498" stroke-width="1.100"/><rect x="506" y="793" width="40" height="5.500" rx="2.700" fill="#b4b6b9"/>
<path d="M1132 793H1142L1137 798Z" fill="#a5a8ab"/>
<path d="M1154 795.700H1160" stroke="#a5a8ab" stroke-width="1.400"/>
<path d="M1167.500 795.700H1225" stroke="#909498" stroke-width="1.100"/><circle cx="1190.500" cy="795.500" r="3.500" fill="#b4b6b9"/>
<path d="M1237 792V799M1233.500 795.700H1240.500" stroke="#a5a8ab" stroke-width="1.300"/>
</svg>
</body></html>
